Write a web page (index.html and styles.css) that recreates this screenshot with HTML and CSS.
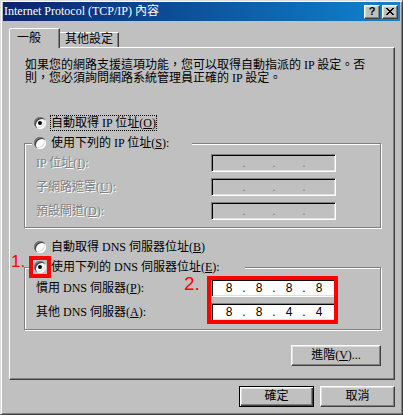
FILE: index.html
```html
<!DOCTYPE html>
<html lang="zh-Hant">
<head>
<meta charset="utf-8">
<title>Internet Protocol (TCP/IP) 內容</title>
<link rel="stylesheet" href="styles.css">
</head>
<body>
<div class="window">
  <div class="titlebar">
    <span class="title">Internet Protocol (TCP/IP) 內容</span>
    <div class="tb-buttons">
      <span class="tb-btn help">?</span>
      <span class="tb-btn close">
        <svg width="8" height="7" viewBox="0 0 8 7" shape-rendering="crispEdges"><path fill="#000" d="M0 0h2v1h-2zM6 0h2v1h-2zM1 1h2v1h-2zM5 1h2v1h-2zM2 2h4v1h-4zM3 3h2v1h-2zM2 4h4v1h-4zM1 5h2v1h-2zM5 5h2v1h-2zM0 6h2v1h-2zM6 6h2v1h-2z"/></svg>
      </span>
    </div>
  </div>
  <div class="body">
    <div class="tabs">
      <div class="tab active">一般</div>
      <div class="tab">其他設定</div>
    </div>
    <div class="panel">
      <p class="intro">如果您的網路支援這項功能，您可以取得自動指派的 IP 設定。否<br>則，您必須詢問網路系統管理員正確的 IP 設定。</p>

      <div class="radio-row first">
        <span class="radio checked"></span>
        <span class="label focus">自動取得 IP 位址(<u>O</u>)</span>
      </div>

      <div class="group ip">
        <div class="group-head">
          <span class="radio"></span>
          <span class="label">使用下列的 IP 位址(<u>S</u>):</span>
        </div>
        <div class="rows">
          <div class="field-row disabled">
            <span class="flabel">IP 位址(<u>I</u>):</span>
            <span class="ipbox off"><span class="oct"></span><span class="dot">.</span><span class="oct"></span><span class="dot">.</span><span class="oct"></span><span class="dot">.</span><span class="oct"></span></span>
          </div>
          <div class="field-row disabled">
            <span class="flabel">子網路遮罩(<u>U</u>):</span>
            <span class="ipbox off"><span class="oct"></span><span class="dot">.</span><span class="oct"></span><span class="dot">.</span><span class="oct"></span><span class="dot">.</span><span class="oct"></span></span>
          </div>
          <div class="field-row disabled">
            <span class="flabel">預設閘道(<u>D</u>):</span>
            <span class="ipbox off"><span class="oct"></span><span class="dot">.</span><span class="oct"></span><span class="dot">.</span><span class="oct"></span><span class="dot">.</span><span class="oct"></span></span>
          </div>
        </div>
      </div>

      <div class="radio-row dns-auto">
        <span class="radio"></span>
        <span class="label">自動取得 DNS 伺服器位址(<u>B</u>)</span>
      </div>

      <div class="group dns">
        <div class="group-head">
          <span class="anno one">1.</span>
          <span class="mark"><span class="radio checked"></span></span>
          <span class="label">使用下列的 DNS 伺服器位址(<u>E</u>):</span>
        </div>
        <div class="rows">
          <div class="field-row">
            <span class="flabel">慣用 DNS 伺服器(<u>P</u>):</span>
            <span class="ipbox on"><span class="oct">8</span><span class="dot">.</span><span class="oct">8</span><span class="dot">.</span><span class="oct">8</span><span class="dot">.</span><span class="oct">8</span></span>
          </div>
          <div class="field-row">
            <span class="flabel">其他 DNS 伺服器(<u>A</u>):</span>
            <span class="ipbox on"><span class="oct">8</span><span class="dot">.</span><span class="oct">8</span><span class="dot">.</span><span class="oct">4</span><span class="dot">.</span><span class="oct">4</span></span>
          </div>
        </div>
        <span class="anno two">2.</span>
        <span class="redbox"></span>
      </div>

      <div class="adv-row">
        <button class="btn adv">進階(<u>V</u>)...</button>
      </div>
    </div>
    <div class="footer">
      <button class="btn default">確定</button>
      <button class="btn">取消</button>
    </div>
  </div>
</div>
</body>
</html>
```

FILE: styles.css
```css
html, body {
  margin: 0;
  padding: 0;
  background: #c0c0c0;
}

.window {
  width: 403px;
  height: 415px;
  box-sizing: border-box;
  background: #c0c0c0;
  border: 1px solid;
  border-color: #dfdfdf #404040 #404040 #dfdfdf;
  box-shadow: inset 1px 1px 0 #fff, inset -1px -1px 0 #808080;
  padding: 1px 2px 2px 2px;
  font-family: "Liberation Serif", "Noto Sans CJK TC", serif;
  font-size: 12px;
  line-height: 13px;
  color: #000;
}

/* title bar */
.titlebar {
  height: 19px;
  display: flex;
  align-items: center;
  justify-content: space-between;
  background: linear-gradient(to right, #0a246a, #1084d0);
  color: #fff;
  padding: 0 2px 0 1px;
}
.title {
  white-space: nowrap;
}
.tb-buttons {
  display: flex;
  gap: 2px;
}
.tb-btn {
  width: 16px;
  height: 14px;
  box-sizing: border-box;
  background: #c0c0c0;
  border: 1px solid;
  border-color: #fff #404040 #404040 #fff;
  box-shadow: inset -1px -1px 0 #808080, inset 1px 1px 0 #dfdfdf;
  display: flex;
  align-items: center;
  justify-content: center;
  color: #000;
}
.tb-btn.help {
  font-family: "Liberation Sans", sans-serif;
  font-weight: bold;
  font-size: 11px;
  line-height: 11px;
}

/* body */
.body {
  padding: 7px 0 0 6px;
}
.tabs {
  display: flex;
  align-items: flex-end;
  height: 19px;
}
.tab {
  box-sizing: border-box;
  background: #c0c0c0;
  white-space: nowrap;
}
.tab.active {
  position: relative;
  z-index: 1;
  width: 51px;
  height: 20px;
  margin-bottom: -1px;
  border-top: 1px solid #fff;
  border-left: 1px solid #fff;
  border-right: 1px solid #404040;
  border-top-left-radius: 2px;
  border-top-right-radius: 1px;
  box-shadow: inset -1px 0 0 #808080;
  padding: 3px 0 0 7px;
}
.tab:not(.active) {
  width: 59px;
  height: 15px;
  border-top: 1px solid #fff;
  border-right: 1px solid #404040;
  border-top-right-radius: 1px;
  box-shadow: inset -1px 0 0 #808080;
  padding: 0 0 0 5px;
}

.panel {
  width: 386px;
  height: 333px;
  box-sizing: border-box;
  border: 1px solid;
  border-color: #fff #404040 #404040 #fff;
  box-shadow: inset -1px -1px 0 #808080;
  padding: 11px 13px 0 14px;
  display: flex;
  flex-direction: column;
}
.intro {
  margin: 0;
  padding-left: 1px;
  white-space: nowrap;
  line-height: 13px;
}

/* radios */
.radio-row {
  height: 18px;
  display: flex;
  align-items: center;
  gap: 4px;
  padding-left: 10px;
}
.radio-row.first {
  margin-top: 29px;
}
.radio-row.dns-auto {
  margin-top: 10px;
}
.radio {
  flex: none;
  width: 12px;
  height: 12px;
  border-radius: 50%;
  background: #fff;
  box-shadow: inset 1px 1px 0 #808080, inset 2px 2px 0 #404040, inset -1px -1px 0 #fff, inset -2px -2px 0 #dfdfdf;
  display: flex;
  align-items: center;
  justify-content: center;
}
.radio.checked::after {
  content: "";
  width: 4px;
  height: 4px;
  border-radius: 50%;
  background: #000;
}
.label {
  white-space: nowrap;
  padding: 1px 1px;
  line-height: 14px;
}
.label.focus {
  outline: 1px dotted #000;
  outline-offset: -1px;
}
.mark {
  flex: none;
  display: flex;
  width: 12px;
  height: 12px;
  outline: 4px solid #ff0000;
  outline-offset: 1px;
}

/* group boxes */
.group {
  position: relative;
  width: 357px;
  box-sizing: border-box;
  border: 1px solid #808080;
  box-shadow: inset 1px 1px 0 #fff, 1px 1px 0 #fff;
  padding: 0 0 4px 11px;
}
.group.ip {
  margin-top: 11px;
}
.group.dns {
  margin-top: 11px;
  padding-bottom: 5px;
}
.group-head {
  position: relative;
  box-sizing: border-box;
  height: 18px;
  margin: -10px 0 0 -4px;
  padding-left: 2px;
  background: #c0c0c0;
  display: flex;
  align-items: center;
  gap: 4px;
}
.group.ip .group-head {
  width: 160px;
}
.group.dns .group-head {
  width: 213px;
}
.rows {
  display: flex;
  flex-direction: column;
}
.group.ip .rows {
  margin-top: -1px;
}
.field-row {
  height: 24px;
  display: flex;
  align-items: center;
}
.flabel {
  width: 175px;
  white-space: nowrap;
}
.field-row.disabled .flabel {
  color: #808080;
  text-shadow: 1px 1px 0 #fff;
}
.ipbox {
  width: 125px;
  height: 18px;
  box-sizing: border-box;
  border: 1px solid;
  border-color: #808080 #fff #fff #808080;
  box-shadow: inset 1px 1px 0 #000, inset -1px -1px 0 #dfdfdf;
  display: flex;
  align-items: center;
  padding-left: 5px;
  font-family: "Liberation Sans", sans-serif;
  font-size: 12px;
  line-height: 14px;
}
.ipbox.off {
  background: #c0c0c0;
  color: #808080;
}
.ipbox.on {
  background: #fff;
  color: #000;
}
.oct {
  width: 24px;
  text-align: center;
}
.dot {
  width: 6px;
  text-align: center;
}

/* annotations */
.anno {
  position: absolute;
  color: #ff0000;
  font-family: "Liberation Sans", sans-serif;
}
.anno.one {
  left: -21px;
  top: -5px;
  font-size: 17px;
  line-height: 17px;
}
.anno.two {
  left: 159px;
  top: 6px;
  font-size: 19px;
  line-height: 19px;
}
.redbox {
  position: absolute;
  left: 182px;
  top: 8px;
  width: 131px;
  height: 48px;
  box-sizing: border-box;
  border: 4px solid #ff0000;
}

/* buttons */
.btn {
  box-sizing: border-box;
  margin: 0;
  padding: 0;
  height: 21px;
  width: 75px;
  background: #c0c0c0;
  border: 1px solid;
  border-color: #fff #404040 #404040 #fff;
  box-shadow: inset -1px -1px 0 #808080, inset 1px 1px 0 #dfdfdf;
  font-family: "Liberation Serif", "Noto Sans CJK TC", serif;
  font-size: 12px;
  line-height: 13px;
  color: #000;
}
.btn.default {
  border: 1px solid #000;
  box-shadow: inset 1px 1px 0 #fff, inset -1px -1px 0 #404040, inset -2px -2px 0 #808080, inset 2px 2px 0 #dfdfdf;
}
.adv-row {
  margin-top: 15px;
  display: flex;
  justify-content: flex-end;
}
.btn.adv {
  width: 90px;
}
.footer {
  width: 386px;
  margin-top: 6px;
  display: flex;
  justify-content: flex-end;
  gap: 6px;
}
```
